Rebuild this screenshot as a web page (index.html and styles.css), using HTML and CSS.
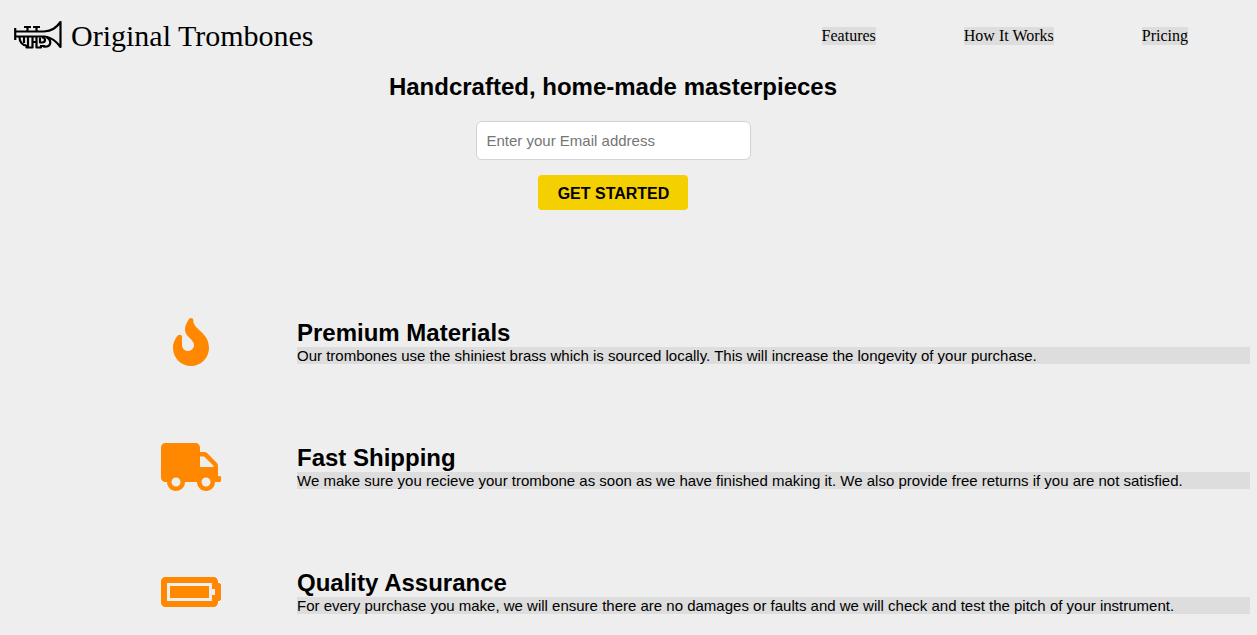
FILE: index.html
```html
<!DOCTYPE html>
<html lang="en">
<head>
<meta charset="utf-8">
<meta name="viewport" content="width=device-width, initial-scale=1">
<title>Original Trombones</title>
<link rel="stylesheet" href="styles.css">
</head>
<body>
<header class="header">
  <div class="logo">
    <svg class="logo-mark" viewBox="0 0 48 30" aria-hidden="true" fill="none" stroke="#000" stroke-width="2.2" stroke-linejoin="round">
      <path d="M1.2 7v12"/>
      <path d="M1 10.5h29C38 10 42 7 46.500 1v25C42 20 38 16.500 31 15.500H1"/>
      <path d="M10 6h7M19 6h7M13.500 6v4M22.500 6v4"/>
      <path d="M5.500 16c0 5 3 8.500 7 8.500M29 25.500c9 1 9-6 3.500-9.500M10 16v6M14 16v10.500h4.500V16M22.500 16v10.500H27V24M18 21h4M12.500 24v2.500H19M26 16.500v5h2c4 0 4-5 0-5M26 25h5"/>
    </svg>
    <span class="logo-name">Original Trombones</span>
  </div>
  <nav class="nav">
    <a class="nav-link" href="#features">Features</a>
    <a class="nav-link" href="#how-it-works">How It Works</a>
    <a class="nav-link" href="#pricing">Pricing</a>
  </nav>
</header>
<main>
  <section class="hero">
    <h2 class="title">Handcrafted, home-made masterpieces</h2>
    <form class="form">
      <input class="email" type="email" name="email" placeholder="Enter your Email address" aria-label="Email address">
      <button class="submit" type="submit">GET STARTED</button>
    </form>
  </section>
  <section class="features" id="features">
    <article class="feature">
      <div class="icon"><svg class="glyph" viewBox="0 0 384 512" aria-hidden="true"><path d="M216 23.86c0-23.8-30.65-32.77-44.15-13.04C48 191.85 224 200 224 288c0 35.63-29.11 64.46-64.85 63.99-35.17-.45-63.15-29.77-63.15-64.94v-85.51c0-21.7-26.47-32.23-41.43-16.5C27.8 213.16 0 261.33 0 320c0 105.87 86.13 192 192 192s192-86.13 192-192c0-170.29-168-193-168-296.14z"/></svg></div>
      <div class="copy">
        <h2 class="title">Premium Materials</h2>
        <p class="text">Our trombones use the shiniest brass which is sourced locally. This will increase the longevity of your purchase.</p>
      </div>
    </article>
    <article class="feature">
      <div class="icon"><svg class="glyph" viewBox="0 0 640 512" aria-hidden="true"><path d="M624 352h-16V243.9c0-12.7-5.1-24.9-14.1-33.9L494 110.1c-9-9-21.2-14.1-33.9-14.1H416V48c0-26.5-21.5-48-48-48H48C21.5 0 0 21.5 0 48v320c0 26.5 21.5 48 48 48h16c0 53 43 96 96 96s96-43 96-96h128c0 53 43 96 96 96s96-43 96-96h48c8.8 0 16-7.2 16-16v-32c0-8.8-7.2-16-16-16zM160 464c-26.5 0-48-21.5-48-48s21.5-48 48-48 48 21.5 48 48-21.5 48-48 48zm320 0c-26.5 0-48-21.5-48-48s21.5-48 48-48 48 21.5 48 48-21.5 48-48 48zm80-208H416V144h44.1l99.9 99.9V256z"/></svg></div>
      <div class="copy">
        <h2 class="title">Fast Shipping</h2>
        <p class="text">We make sure you recieve your trombone as soon as we have finished making it. We also provide free returns if you are not satisfied.</p>
      </div>
    </article>
    <article class="feature">
      <div class="icon"><svg class="glyph" viewBox="0 0 640 512" aria-hidden="true"><path d="M544 160v64h32v64h-32v64H64V160h480m16-64H48c-26.51 0-48 21.49-48 48v224c0 26.51 21.49 48 48 48h512c26.51 0 48-21.49 48-48v-16h8c13.255 0 24-10.745 24-24V184c0-13.255-10.745-24-24-24h-8v-16c0-26.51-21.49-48-48-48zm-48 96H96v128h416V192z"/></svg></div>
      <div class="copy">
        <h2 class="title">Quality Assurance</h2>
        <p class="text">For every purchase you make, we will ensure there are no damages or faults and we will check and test the pitch of your instrument.</p>
      </div>
    </article>
  </section>
</main>
</body>
</html>
```
FILE: styles.css
```css
* {
  box-sizing: border-box;
}

body {
  margin: 0;
  background: #eee;
  color: #000;
  font-family: "Liberation Sans", Arial, sans-serif;
}

.header {
  display: flex;
  align-items: center;
  justify-content: space-between;
  padding: 18px 69px 0 14px;
  font-family: "Liberation Serif", "Times New Roman", serif;
}

.logo {
  display: flex;
  align-items: center;
  gap: 9px;
}

.logo-mark {
  width: 48px;
  height: 30px;
}

.logo-name {
  font-size: 30px;
  line-height: 36px;
}

.nav {
  display: flex;
  gap: 88px;
}

.nav-link {
  background: #ddd;
  color: #000;
  font-size: 16px;
  line-height: 18px;
  text-decoration: none;
}

.title {
  margin: 0;
  font-size: 24px;
  line-height: 28px;
}

.hero {
  padding: 19px 31px 0 0;
  text-align: center;
}

.form {
  display: flex;
  flex-direction: column;
  align-items: center;
  gap: 15px;
  margin-top: 20px;
}

.email {
  width: 275px;
  padding: 10px;
  border: 1px solid #ced4da;
  border-radius: 6px;
  background: #fff;
  font-family: inherit;
  font-size: 15px;
  line-height: 17px;
}

.submit {
  width: 150px;
  height: 35px;
  padding: 2px 0 0 1px;
  border: 0;
  border-radius: 4px;
  background: #f5d000;
  color: #000;
  font-family: inherit;
  font-size: 16px;
  font-weight: 700;
}

.features {
  display: grid;
  gap: 77px;
  padding: 108px 7px 24px 85px;
}

.feature {
  display: grid;
  grid-template-columns: 212px 1fr;
  align-items: center;
}

.icon {
  display: flex;
  justify-content: center;
}

.glyph {
  height: 48px;
  fill: #ff8800;
}

.copy {
  padding-bottom: 2px;
}

.text {
  margin: 0;
  background: #ddd;
  font-size: 15px;
  line-height: 17px;
}
```
